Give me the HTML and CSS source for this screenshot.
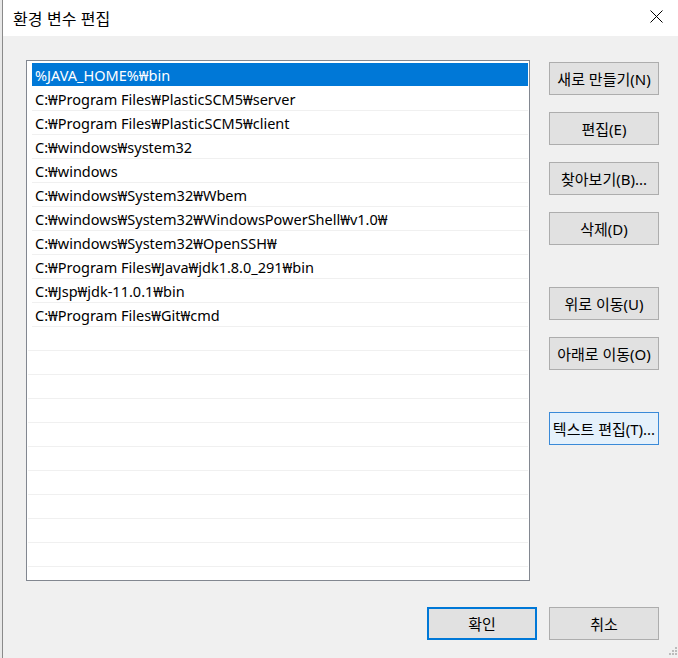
FILE: index.html
```html
<!DOCTYPE html>
<html lang="ko">
<head>
<meta charset="utf-8">
<link rel="stylesheet" href="styles.css">
</head>
<body>
<div class="screen">
  <div class="behind"></div>
  <div class="dialog">
    <div class="titlebar">
      <span class="title">환경 변수 편집</span>
      <svg class="close" width="13" height="13" viewBox="0 0 13 13"><path d="M0.5 0.5 L12.5 12.5 M12.5 0.5 L0.5 12.5" stroke="#000" stroke-width="1" fill="none"/></svg>
    </div>
    <div class="content">
      <div class="main">
        <div class="listbox">
          <div class="row filled selected">%JAVA_HOME%₩bin</div>
          <div class="row filled">C:₩Program Files₩PlasticSCM5₩server</div>
          <div class="row filled">C:₩Program Files₩PlasticSCM5₩client</div>
          <div class="row filled">C:₩windows₩system32</div>
          <div class="row filled">C:₩windows</div>
          <div class="row filled">C:₩windows₩System32₩Wbem</div>
          <div class="row filled">C:₩windows₩System32₩WindowsPowerShell₩v1.0₩</div>
          <div class="row filled">C:₩windows₩System32₩OpenSSH₩</div>
          <div class="row filled">C:₩Program Files₩Java₩jdk1.8.0_291₩bin</div>
          <div class="row filled">C:₩Jsp₩jdk-11.0.1₩bin</div>
          <div class="row filled">C:₩Program Files₩Git₩cmd</div>
          <div class="row"></div><div class="row"></div><div class="row"></div>
          <div class="row"></div><div class="row"></div><div class="row"></div>
          <div class="row"></div><div class="row"></div><div class="row"></div>
          <div class="row"></div><div class="row"></div>
        </div>
        <div class="side">
          <button class="btn">새로 만들기(N)</button>
          <button class="btn">편집(E)</button>
          <button class="btn">찾아보기(B)...</button>
          <button class="btn">삭제(D)</button>
          <button class="btn group">위로 이동(U)</button>
          <button class="btn">아래로 이동(O)</button>
          <button class="btn group hover">텍스트 편집(T)...</button>
        </div>
      </div>
      <div class="footer">
        <button class="btn default">확인</button>
        <button class="btn">취소</button>
      </div>
    </div>
    <svg class="grip" width="11" height="11" viewBox="0 0 11 11">
      <rect x="8" y="0" width="2" height="2" fill="#bcbcbc"/>
      <rect x="5" y="3" width="2" height="2" fill="#bcbcbc"/>
      <rect x="8" y="3" width="2" height="2" fill="#bcbcbc"/>
      <rect x="2" y="6" width="2" height="2" fill="#bcbcbc"/>
      <rect x="5" y="6" width="2" height="2" fill="#bcbcbc"/>
      <rect x="8" y="6" width="2" height="2" fill="#bcbcbc"/>
    </svg>
  </div>
</div>
</body>
</html>
```
FILE: styles.css
```css
* { box-sizing: border-box; }
html, body {
  margin: 0;
  padding: 0;
  width: 678px;
  height: 658px;
  overflow: hidden;
  background: #f0f0f0;
  font-family: "Noto Sans", "Noto Sans CJK KR", sans-serif;
  font-size: 15px;
  color: #000;
}
.screen {
  display: flex;
  width: 678px;
  height: 658px;
}
.behind {
  width: 3px;
  background: #e8e8e8;
  border-right: 1px solid #8a8a8a;
  flex: none;
}
.dialog {
  flex: 1;
  display: flex;
  flex-direction: column;
  position: relative;
  background: #f0f0f0;
}
.titlebar {
  height: 36px;
  background: #fff;
  display: flex;
  align-items: center;
  justify-content: space-between;
  padding: 0 15px 0 10px;
  flex: none;
}
.title {
  font-family: "Noto Sans CJK KR", sans-serif;
  font-size: 16px;
  line-height: 20px;
  margin-top: 0;
}
.close { display: block; margin-top: -3px; }
.content {
  flex: 1;
  display: flex;
  flex-direction: column;
  padding: 24px 19px 0 23px;
}
.main {
  display: flex;
  gap: 19px;
}
.listbox {
  width: 504px;
  height: 521px;
  border: 1px solid #828790;
  background: #fff;
  padding: 2px 1px 0 1px;
  overflow: hidden;
  flex: none;
}
.row {
  height: 24px;
  border-bottom: 1px solid #f0f0f0;
  line-height: 23px;
  padding-top: 1px;
  white-space: nowrap;
  font-size: 14.5px;
}
.row.filled {
  margin-left: 4px;
  padding-left: 3px;
}
.row.selected {
  background: #0078d7;
  color: #fff;
  border-bottom-color: #fff;
}
.side {
  display: flex;
  flex-direction: column;
  gap: 17px;
  padding-top: 2px;
}
.btn {
  width: 110px;
  height: 33px;
  background: #e1e1e1;
  border: 1px solid #adadad;
  font-family: "Noto Sans", "Noto Sans CJK KR", sans-serif;
  font-size: 15px;
  color: #000;
  padding: 0;
  margin: 0;
  white-space: nowrap;
  overflow: visible;
  display: flex;
  align-items: center;
  justify-content: center;
  flex: none;
}
.btn.group { margin-top: 25px; }
.btn.hover {
  background: #e5f1fb;
  border-color: #3a8ad8;
}
.btn.default {
  border: 2px solid #0078d7;
}
.footer {
  display: flex;
  justify-content: flex-end;
  gap: 12px;
  margin-top: 26px;
}
.grip {
  position: absolute;
  right: 0;
  bottom: 0;
}
```
